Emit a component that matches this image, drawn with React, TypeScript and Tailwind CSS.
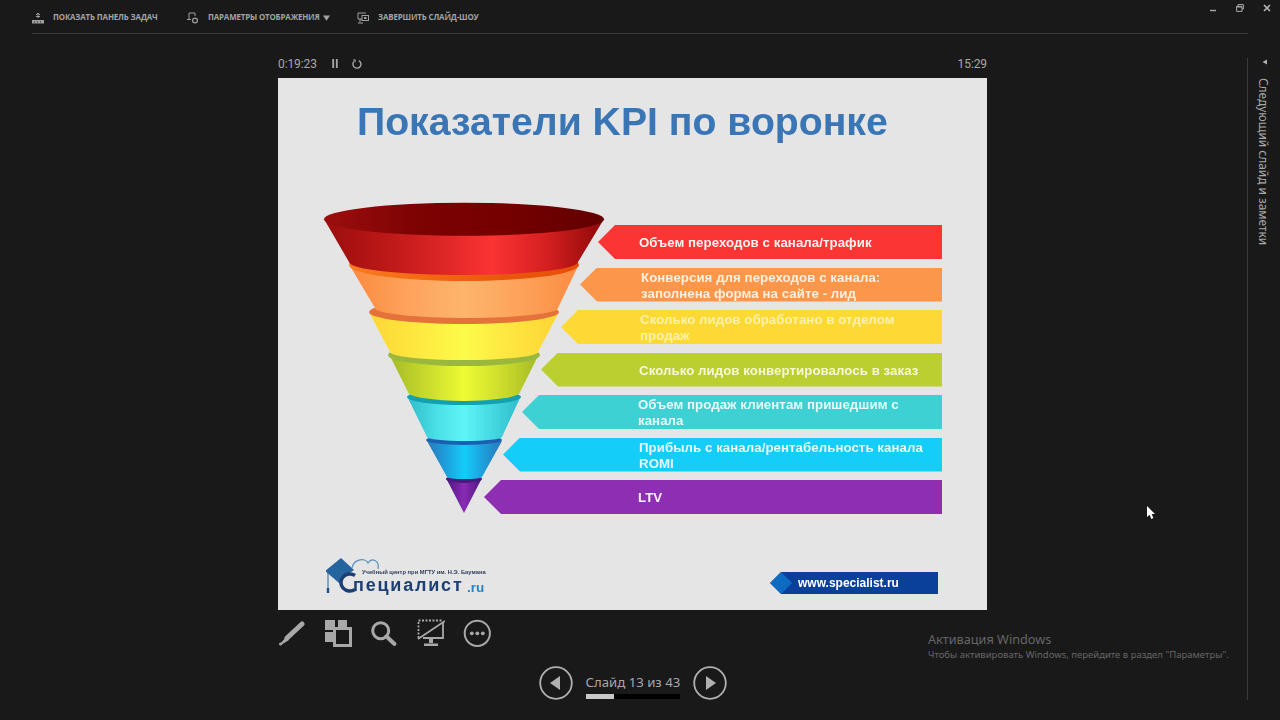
import React from "react";

const arrows = [
  { c: "ml-[114px] bg-[#fb3434]", t: "text-[#fff3f0]", l: ["Объем переходов с канала/трафик"], w: "w-[303px]" },
  { c: "ml-[96px] bg-[#fc964a]", t: "text-[#fff0e0]", l: ["Конверсия для переходов с канала:", "заполнена форма на сайте - лид"], w: "w-[301px]" },
  { c: "ml-[77px] bg-[#fdd935]", t: "text-[#fdf2a8]", l: ["Сколько лидов обработано в отделом", "продаж"], w: "w-[302px]" },
  { c: "ml-[57px] bg-[#bccf30]", t: "text-[#f6f9d8]", l: ["Сколько лидов конвертировалось в заказ"], w: "w-[303px]" },
  { c: "ml-[38px] bg-[#3dd1d3]", t: "text-[#e8fbfb]", l: ["Объем продаж клиентам пришедшим с", "канала"], w: "w-[304px]" },
  { c: "ml-[19px] bg-[#14cdf8]", t: "text-[#e8faff]", l: ["Прибыль с канала/рентабельность канала", "ROMI"], w: "w-[303px]" },
  { c: "ml-0 bg-[#8e2fb3]", t: "text-[#fbf2ff]", l: ["LTV"], w: "w-[304px]" },
];

function Grad({ id, stops }: { id: string; stops: string[] }) {
  return (
    <linearGradient id={id} x1="0" y1="0" x2="1" y2="0">
      {stops.map((s, i) => (
        <stop key={i} offset={i / (stops.length - 1)} stopColor={s} />
      ))}
    </linearGradient>
  );
}

function Funnel() {
  return (
    <svg viewBox="320 200 290 316" className="ml-[42px] h-[316px] w-[290px] self-start">
      <defs>
        <Grad id="gr" stops={["#9a0d0d", "#b91616", "#d92424", "#fb3333", "#d41f1f", "#8d0808"]} />
        <Grad id="gt" stops={["#9c0e0e", "#7d0202", "#740000", "#620000"]} />
        <Grad id="go" stops={["#fb8a3e", "#fea25c", "#fdb56c", "#fda25a", "#fb8c42"]} />
        <Grad id="gor" stops={["#f97a20", "#f36a12", "#e9570c", "#e84e08"]} />
        <Grad id="gy" stops={["#fdd636", "#fee83f", "#fdfb4a", "#fee540", "#fdd636"]} />
        <Grad id="ggn" stops={["#a6bb27", "#c9db2c", "#ecfb33", "#cddd2c", "#a6bb27"]} />
        <Grad id="gte" stops={["#2fbccb", "#49dfe6", "#5ef5f7", "#45d9e2", "#2fbccb"]} />
        <Grad id="gb" stops={["#2a78b8", "#1d9fdc", "#14ccf8", "#1d9fdc", "#2a78b8"]} />
        <Grad id="gp" stops={["#4e1680", "#8a2cb4", "#4e1680"]} />
      </defs>
      <path d="M446 478 L464 513 L482 478 Z" fill="url(#gp)" />
      <ellipse cx="464" cy="479" rx="18" ry="4" fill="#4a1a80" />
      <path d="M427 441 L447 477 A17.5 2 0 0 0 482 477 L502 441 Z" fill="url(#gb)" />
      <ellipse cx="464" cy="440" rx="38" ry="5" fill="#1a5fb0" />
      <path d="M408 398 L427 437 A37.5 4 0 0 0 502 437 L520 398 Z" fill="url(#gte)" />
      <ellipse cx="464" cy="397" rx="57" ry="8" fill="#13a0b0" />
      <path d="M390 356 L408 392 A56 9 0 0 0 520 392 L538 356 Z" fill="url(#ggn)" />
      <ellipse cx="464" cy="355" rx="76" ry="11" fill="#9ab83c" />
      <path d="M370 314 L390 352 A74 8 0 0 0 538 352 L558 314 Z" fill="url(#gy)" />
      <ellipse cx="464" cy="312" rx="95" ry="12" fill="#e4723a" />
      <path d="M350 266 L375 308 A91.5 10 0 0 0 558 308 L578 266 Z" fill="url(#go)" />
      <ellipse cx="464" cy="265" rx="115" ry="16" fill="url(#gor)" />
      <path d="M324 219 L349 262 A114.5 13 0 0 0 578 262 L604 219 Z" fill="url(#gr)" />
      <ellipse cx="464" cy="219.3" rx="140" ry="16.5" fill="url(#gt)" />
    </svg>
  );
}

function Arrow({ a }: { a: (typeof arrows)[number] }) {
  return (
    <div className={`flex h-[34px] justify-end items-center pt-[2px] [clip-path:polygon(17px_0,100%_0,100%_100%,17px_100%,0_50%)] ${a.c}`}>
      <div className={`${a.w} font-['Liberation_Sans'] text-[13.25px] leading-[16px] font-bold tracking-[0.06px] ${a.t}`}>
        {a.l.map((s) => (
          <div key={s} className="whitespace-nowrap">{s}</div>
        ))}
      </div>
    </div>
  );
}

function Logo() {
  return (
    <div className="flex h-[42px] w-[160px] items-end font-['Liberation_Sans'] text-[#1c3f73]">
      <div className="relative h-[42px] w-[160px]">
        <svg viewBox="0 0 160 42" className="absolute inset-0 h-[42px] w-[160px]">
          <path d="M15 3 L-1 16 L13 28 L21 20 L28 15 Z" fill="#25649e" />
          <path d="M2 18 L2 33" stroke="#25649e" strokeWidth="1" />
          <rect x="0.8" y="33" width="2.4" height="5" fill="#1c4f80" />
          <path d="M26 13 C28 3 40 3 42 8 C46 2 54 6 52 14" stroke="#5c8fbe" strokeWidth="1.2" fill="none" />
          <path d="M29 20.5 A9 8.5 0 1 0 29 34.5" stroke="#1c3f73" strokeWidth="3.6" fill="none" />
        </svg>
        <span className="absolute left-[36px] top-[14px] whitespace-nowrap text-[5.8px] leading-[7px] font-bold text-[#2c3e58]">Учебный центр при МГТУ им. Н.Э. Баумана</span>
        <span className="absolute left-[27px] top-[23px] whitespace-nowrap text-[18px] leading-[14px] font-bold tracking-[1.8px]">пециалист</span>
        <span className="absolute left-[141px] top-[25px] whitespace-nowrap text-[13.5px] leading-[15px] font-bold text-[#2a82c0]">.ru</span>
      </div>
    </div>
  );
}

function UrlBadge() {
  return (
    <div className="mb-[3px] flex h-[22px] w-[168px] items-center self-end [clip-path:polygon(11px_0,100%_0,100%_100%,11px_100%,0_50%)] bg-[#0a409a]">
      <div className="h-[22px] w-[22px] shrink-0 [clip-path:polygon(11px_0,22px_50%,11px_100%,0_50%)] bg-[#0d6cc2]" />
      <span className="ml-[6px] font-['Liberation_Sans'] text-[12px] font-bold text-white">www.specialist.ru</span>
    </div>
  );
}

function ToolIcon({ children }: { children: React.ReactNode }) {
  return (
    <svg viewBox="0 0 28 28" className="h-[28px] w-[28px] text-[#a8a8a8]" fill="none" stroke="currentColor">
      {children}
    </svg>
  );
}

function Nav({ right }: { right?: boolean }) {
  return (
    <svg viewBox="0 0 34 34" className="h-[34px] w-[34px] text-[#b0b0b0]">
      <circle cx="17" cy="17" r="15.8" fill="none" stroke="currentColor" strokeWidth="1.8" />
      <path d={right ? "M13 10 L23 17 L13 24 Z" : "M21 10 L11 17 L21 24 Z"} fill="currentColor" />
    </svg>
  );
}

function TopItem({ icon, label, extra, width }: { icon: React.ReactNode; label: string; extra?: React.ReactNode; width: string }) {
  return (
    <div className={`flex items-center ${width}`}>
      <svg viewBox="0 0 12 12" className="h-[12px] w-[12px] text-[#a0a0a0]" fill="none" stroke="currentColor">
        {icon}
      </svg>
      <span className="ml-[9px] flex items-center gap-[3px] whitespace-nowrap font-['Open_Sans'] text-[7.9px] font-bold tracking-[-0.14px] text-[#a2a2a2]">
        {label}
        {extra}
      </span>
    </div>
  );
}

export default function App() {
  return (
    <div className="relative flex h-[720px] w-[1280px] flex-col overflow-hidden bg-[#191919] font-['Noto_Sans',sans-serif]">
      <header className="ml-[32px] flex h-[34px] w-[1216px] shrink-0 items-center border-b border-[#3a3a3a] pt-[3px]">
        <TopItem
          width="w-[155px]"
          label="ПОКАЗАТЬ ПАНЕЛЬ ЗАДАЧ"
          icon={<>
            <path d="M6 1 V6 M4 3 L6 1 L8 3 M4 4.5 H8" strokeWidth="1" />
            <path d="M0 8 H12 V11.5 H0 Z" fill="currentColor" stroke="none" />
            <path d="M2 10 H3 M5 10 H6 M8 10 H9" stroke="#191919" strokeWidth="1" />
          </>}
        />
        <TopItem
          width="w-[170px]"
          label="ПАРАМЕТРЫ ОТОБРАЖЕНИЯ"
          extra={<svg viewBox="0 0 8 6" className="h-[6px] w-[7px] text-[#a2a2a2]"><path d="M0 0 H8 L4 6 Z" fill="currentColor" /></svg>}
          icon={<>
            <path d="M2 7 V1 H8 V4" strokeWidth="1" />
            <path d="M0 7.5 H4" strokeWidth="1" />
            <circle cx="8" cy="8.5" r="2.4" strokeWidth="1.2" />
          </>}
        />
        <TopItem
          width="w-[150px]"
          label="ЗАВЕРШИТЬ СЛАЙД-ШОУ"
          icon={<>
            <path d="M1 1 H9 M1 1 V7 H5 M3 7 V10 M1 11 H6" strokeWidth="1" />
            <rect x="5" y="3.5" width="6.5" height="5" strokeWidth="1" />
            <rect x="7" y="5" width="2.5" height="2" fill="currentColor" stroke="none" />
          </>}
        />
      </header>

      <div className="absolute right-[9px] top-[4px] flex items-center gap-[19px]">
        <svg viewBox="0 0 8 8" className="h-[8px] w-[8px]"><path d="M1 6.5 H7" stroke="#a8a8a8" strokeWidth="1.4" /></svg>
        <svg viewBox="0 0 8 8" className="h-[8px] w-[8px]"><path d="M2 2 V0.6 H7.4 V5 H6 M0.6 2.4 H6 V7.4 H0.6 Z M0.6 3 H6" stroke="#a8a8a8" strokeWidth="1" fill="none" /></svg>
        <svg viewBox="0 0 8 8" className="h-[8px] w-[8px]"><path d="M1 1 L7 7 M7 1 L1 7" stroke="#b4b4b4" strokeWidth="1.7" /></svg>
      </div>

      <div className="flex min-h-0 flex-1">
        <main className="ml-[278px] flex w-[709px] flex-col">
          <div className="mt-[15px] flex h-[29px] items-center font-['Roboto'] text-[12px] tracking-[-0.1px] text-[#a8a8a8]">
            <span className="w-[38px] whitespace-nowrap">0:19:23</span>
            <svg viewBox="0 0 8 10" className="ml-[15px] h-[9px] w-[8px]"><path d="M1 0 H3 V10 H1 Z M5 0 H7 V10 H5 Z" fill="#a8a8a8" /></svg>
            <svg viewBox="0 0 10 10" className="ml-[13px] h-[10px] w-[10px]" fill="none"><path d="M6.8 1.6 A4 4 0 1 1 2 2.4" stroke="#a8a8a8" strokeWidth="1.4" /><path d="M0.8 0.6 H3.6 V3.6 Z" fill="#a8a8a8" /></svg>
            <span className="ml-auto">15:29</span>
          </div>

          <section className="flex h-[532px] shrink-0 flex-col bg-[#e6e5e6] blur-[0.35px]">
            <h1 className="flex h-[88px] shrink-0 items-center pl-[79px] font-['Liberation_Sans'] text-[39.2px] font-bold leading-none whitespace-nowrap text-[#3a76b6]">
              Показатели KPI по воронке
            </h1>
            <div className="mt-[34px] grid grid-cols-1">
              <div className="col-start-1 row-start-1 flex">
                <Funnel />
              </div>
              <div className="col-start-1 row-start-1 ml-[206px] mr-[45px] mt-[25px] flex flex-col gap-[8.5px] self-start">
                {arrows.map((a) => (
                  <Arrow key={a.l[0]} a={a} />
                ))}
              </div>
            </div>
            <footer className="mt-[39px] flex items-center justify-between pl-[48px] pr-[49px]">
              <Logo />
              <UrlBadge />
            </footer>
          </section>

          <div className="mt-[9px] -ml-[1px] flex h-[28px] items-center gap-[18.5px]">
            <ToolIcon>
              <path d="M25 5 L10 19" strokeWidth="5" strokeLinecap="round" />
              <path d="M9 18 L3 25 L4 26 L12 21 Z" fill="currentColor" stroke="none" />
              <circle cx="3.5" cy="25" r="1.5" fill="currentColor" stroke="none" />
            </ToolIcon>
            <ToolIcon>
              <rect x="1" y="1" width="10" height="10" fill="currentColor" stroke="none" />
              <rect x="14" y="1" width="9" height="7" fill="currentColor" stroke="none" />
              <rect x="1" y="13" width="8" height="10" fill="currentColor" stroke="none" />
              <rect x="10.5" y="9.5" width="16" height="17" strokeWidth="3" />
            </ToolIcon>
            <ToolIcon>
              <circle cx="10.7" cy="11.7" r="8" strokeWidth="3" />
              <path d="M16.5 17.5 L24.5 25" strokeWidth="4" strokeLinecap="round" />
            </ToolIcon>
            <ToolIcon>
              <path d="M1.5 19 V1.5 H26" strokeWidth="1.8" strokeDasharray="2 1.5" />
              <path d="M26 3 V19 H6" strokeWidth="1.8" />
              <path d="M1 20 L28 2" strokeWidth="1.8" />
              <path d="M12 19 H16 V24 H12 Z M7 24.5 H21 V27 H7 Z" fill="currentColor" stroke="none" />
            </ToolIcon>
            <ToolIcon>
              <circle cx="14.3" cy="14.3" r="12.6" strokeWidth="2" />
              <circle cx="8.8" cy="14.3" r="1.9" fill="currentColor" stroke="none" />
              <circle cx="14.3" cy="14.3" r="1.9" fill="currentColor" stroke="none" />
              <circle cx="19.8" cy="14.3" r="1.9" fill="currentColor" stroke="none" />
            </ToolIcon>
          </div>

          <div className="mt-[19px] flex items-start justify-center gap-[13px]">
            <Nav />
            <div className="flex w-[94px] flex-col">
              <span className="h-[28px] whitespace-nowrap text-[13.2px] leading-[32px] text-[#a8a8a8]">Слайд 13 из 43</span>
              <div className="h-[5px] w-[94px] bg-black">
                <div className="h-full w-[28px] bg-[#c8c8c8]" />
              </div>
            </div>
            <Nav right />
          </div>
        </main>

        <aside className="ml-[260px] mt-[24px] flex h-[642px] w-[33px] flex-col items-center border-l border-[#3a3a3a] pr-[1px]">
          <svg viewBox="0 0 6 6" className="ml-[2px] mt-[1px] h-[6px] w-[6px]"><path d="M0.5 3 L5 0.5 V5.5 Z" fill="#b0b0b0" /></svg>
          <span className="mt-[13px] whitespace-nowrap text-[11.9px] leading-[16px] text-[#a8a8a8] [writing-mode:vertical-rl]">Следующий слайд и заметки</span>
        </aside>
      </div>

      <div className="absolute left-[928px] top-[630px] text-[#666666]">
        <div className="text-[12.7px] leading-[18px]">Активация Windows</div>
        <div className="whitespace-nowrap text-[9.5px] leading-[13px]">Чтобы активировать Windows, перейдите в раздел "Параметры".</div>
      </div>

      <svg viewBox="0 0 9 14" className="absolute left-[1147px] top-[506px] h-[14px] w-[9px]">
        <path d="M0 0 L0 11 L2.6 8.8 L4.4 13 L6.4 12 L4.6 8 L8 8 Z" fill="#fff" />
      </svg>
    </div>
  );
}
